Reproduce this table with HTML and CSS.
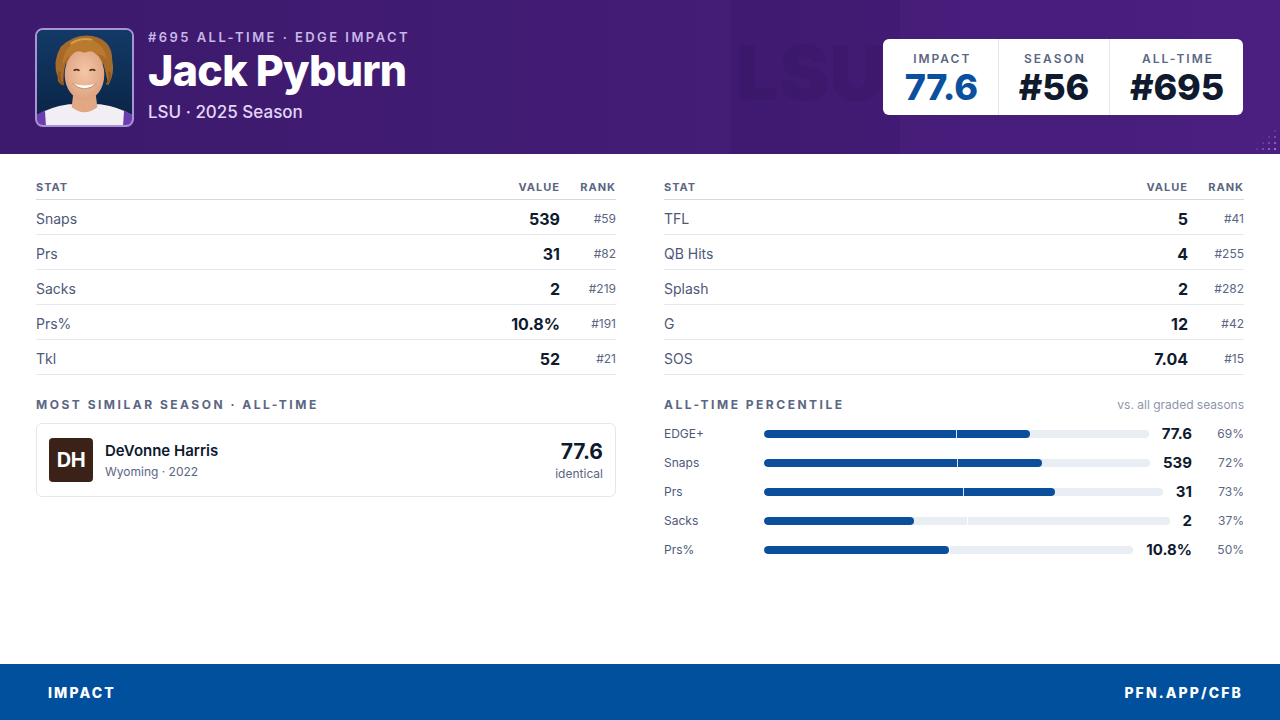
FILE: index.html
```html
<!DOCTYPE html>
<html>
<head>
<meta charset="utf-8">
<link rel="stylesheet" href="styles.css">
</head>
<body>
<div class="page">
  <header class="hero">
    <div class="band"></div>
    <div class="watermark">LSU</div>
    <div class="dots"></div>
    <div class="photo">
      <svg viewBox="0 0 96 96" width="96" height="96">
        <defs>
          <linearGradient id="bg" x1="0" y1="0" x2="0" y2="1">
            <stop offset="0" stop-color="#123a66"/>
            <stop offset="1" stop-color="#0a2344"/>
          </linearGradient>
          <radialGradient id="skin" cx="0.5" cy="0.45" r="0.6">
            <stop offset="0" stop-color="#f4c7a8"/>
            <stop offset="1" stop-color="#dc9f7c"/>
          </radialGradient>
        </defs>
        <rect width="96" height="96" fill="url(#bg)"/>
        <path d="M0 96 L0 86 Q12 78 32 75 L64 75 Q84 78 96 86 L96 96 Z" fill="#f1eff3"/>
        <path d="M0 86 Q4 83 8 81 L9 96 L0 96Z" fill="#6a3db0"/>
        <path d="M96 86 Q92 83 88 81 L87 96 L96 96Z" fill="#6a3db0"/>
        <path d="M37 62 L59 62 L61 78 Q48 88 35 78 Z" fill="#e2a884"/>
        <path d="M21 48 Q15 32 24 17 Q38 3 56 6 Q76 10 76 30 Q79 44 72 56 Q70 44 67 34 L29 34 Q26 44 27 56 Q20 54 21 48Z" fill="#a66a2b"/>
        <ellipse cx="48" cy="45" rx="20" ry="26" fill="url(#skin)"/>
        <path d="M26 36 Q26 14 46 10 Q66 8 71 30 Q66 24 60 25 Q56 19 48 23 Q40 19 35 25 Q29 27 26 36Z" fill="#b9792f"/>
        <path d="M34 14 Q44 7 56 10" stroke="#d49e50" stroke-width="2" fill="none"/>
        <path d="M23 42 Q21 50 26 55" stroke="#8c5520" stroke-width="2" fill="none"/>
        <path d="M73 42 Q75 50 70 55" stroke="#8c5520" stroke-width="2" fill="none"/>
        <path d="M36 54 Q48 65 60 54 Q48 58 36 54Z" fill="#ffffff"/>
        <path d="M36 54 Q48 65 60 54" stroke="#b0705a" stroke-width="0.8" fill="none"/>
        <path d="M37 41 Q40 39 43 41" stroke="#4e3024" stroke-width="1.6" fill="none"/>
        <path d="M53 41 Q56 39 59 41" stroke="#4e3024" stroke-width="1.6" fill="none"/>
      </svg>
    </div>
    <div class="intro">
      <div class="eyebrow">#695 ALL-TIME · EDGE IMPACT</div>
      <h1 class="name">Jack Pyburn</h1>
      <div class="sub">LSU · 2025 Season</div>
    </div>
    <div class="scorebox">
      <div class="score">
        <div class="score-label">IMPACT</div>
        <div class="score-value blue">77.6</div>
      </div>
      <div class="score">
        <div class="score-label">SEASON</div>
        <div class="score-value">#56</div>
      </div>
      <div class="score">
        <div class="score-label">ALL-TIME</div>
        <div class="score-value">#695</div>
      </div>
    </div>
  </header>

  <main class="content">
    <section class="col">
      <div class="table">
        <div class="trow thead"><span class="c-stat">STAT</span><span class="c-val">VALUE</span><span class="c-rank">RANK</span></div>
        <div class="trow"><span class="c-stat">Snaps</span><span class="c-val">539</span><span class="c-rank">#59</span></div>
        <div class="trow"><span class="c-stat">Prs</span><span class="c-val">31</span><span class="c-rank">#82</span></div>
        <div class="trow"><span class="c-stat">Sacks</span><span class="c-val">2</span><span class="c-rank">#219</span></div>
        <div class="trow"><span class="c-stat">Prs%</span><span class="c-val">10.8%</span><span class="c-rank">#191</span></div>
        <div class="trow"><span class="c-stat">Tkl</span><span class="c-val">52</span><span class="c-rank">#21</span></div>
      </div>
      <div class="section-head"><span class="section-title">MOST SIMILAR SEASON · ALL-TIME</span></div>
      <div class="card">
        <div class="avatar">DH</div>
        <div class="card-info">
          <div class="card-name">DeVonne Harris</div>
          <div class="card-sub">Wyoming · 2022</div>
        </div>
        <div class="card-score">
          <div class="card-num">77.6</div>
          <div class="card-note">identical</div>
        </div>
      </div>
    </section>

    <section class="col">
      <div class="table">
        <div class="trow thead"><span class="c-stat">STAT</span><span class="c-val">VALUE</span><span class="c-rank">RANK</span></div>
        <div class="trow"><span class="c-stat">TFL</span><span class="c-val">5</span><span class="c-rank">#41</span></div>
        <div class="trow"><span class="c-stat">QB Hits</span><span class="c-val">4</span><span class="c-rank">#255</span></div>
        <div class="trow"><span class="c-stat">Splash</span><span class="c-val">2</span><span class="c-rank">#282</span></div>
        <div class="trow"><span class="c-stat">G</span><span class="c-val">12</span><span class="c-rank">#42</span></div>
        <div class="trow"><span class="c-stat">SOS</span><span class="c-val">7.04</span><span class="c-rank">#15</span></div>
      </div>
      <div class="section-head">
        <span class="section-title">ALL-TIME PERCENTILE</span>
        <span class="section-note">vs. all graded seasons</span>
      </div>
      <div class="bars">
        <div class="bar-row"><span class="bar-label">EDGE+</span><div class="track"><div class="fill" style="width:69%"></div><div class="mid"></div></div><span class="bar-val">77.6</span><span class="bar-pct">69%</span></div>
        <div class="bar-row"><span class="bar-label">Snaps</span><div class="track"><div class="fill" style="width:72%"></div><div class="mid"></div></div><span class="bar-val">539</span><span class="bar-pct">72%</span></div>
        <div class="bar-row"><span class="bar-label">Prs</span><div class="track"><div class="fill" style="width:73%"></div><div class="mid"></div></div><span class="bar-val">31</span><span class="bar-pct">73%</span></div>
        <div class="bar-row"><span class="bar-label">Sacks</span><div class="track"><div class="fill" style="width:37%"></div><div class="mid"></div></div><span class="bar-val">2</span><span class="bar-pct">37%</span></div>
        <div class="bar-row"><span class="bar-label">Prs%</span><div class="track"><div class="fill" style="width:50%"></div><div class="mid"></div></div><span class="bar-val">10.8%</span><span class="bar-pct">50%</span></div>
      </div>
    </section>
  </main>

  <footer class="footer">
    <span class="foot-text">IMPACT</span>
    <span class="foot-text">PFN.APP/CFB</span>
  </footer>
</div>
</body>
</html>
```

FILE: styles.css
```css
* { box-sizing: border-box; margin: 0; padding: 0; }
html, body { width: 1280px; height: 720px; overflow: hidden; }
body { font-family: Inter, "Noto Sans", sans-serif; background: #ffffff; color: #0f1a2e; }

.page { width: 1280px; height: 720px; display: flex; flex-direction: column; }

.hero {
  position: relative;
  height: 154px;
  flex: 0 0 154px;
  display: flex;
  align-items: center;
  padding: 0 37px 0 35px;
  background: linear-gradient(90deg, #3d1a6d 0%, #421c74 45%, #4a1f80 100%);
  overflow: hidden;
}
.band {
  position: absolute; left: 730px; top: 0; width: 170px; height: 154px;
  background: rgba(20, 6, 50, 0.08);
}
.watermark {
  position: absolute; left: 736px; top: 34px;
  font-size: 76px; font-weight: 900; letter-spacing: 0px;
  color: rgba(25, 8, 60, 0.10);
  line-height: 1;
}
.dots {
  position: absolute; right: 0; bottom: 0; width: 32px; height: 26px;
  background-image: radial-gradient(circle, rgba(190, 160, 245, 0.7) 1px, transparent 1.5px);
  background-size: 6px 6px;
  -webkit-mask-image: linear-gradient(135deg, transparent 40%, #000 85%);
  mask-image: linear-gradient(135deg, transparent 40%, #000 85%);
}

.photo {
  position: relative;
  width: 99px; height: 99px;
  border: 2px solid #a893d4;
  border-radius: 8px;
  overflow: hidden;
  flex: 0 0 auto;
  margin-top: 1px;
}
.photo svg { display: block; width: 100%; height: 100%; }

.intro { position: relative; margin-left: 14px; display: flex; flex-direction: column; margin-top: -2px; }
.eyebrow { font-size: 13px; font-weight: 600; letter-spacing: 2.45px; color: #c9b8e8; line-height: 16px; }
.name { font-size: 43px; font-weight: 800; color: #ffffff; line-height: 46px; letter-spacing: -0.7px; margin-top: 2px; }
.sub { font-size: 17px; font-weight: 500; color: #e2d6f6; line-height: 22px; margin-top: 8px; }

.scorebox {
  position: relative;
  margin-left: auto;
  display: flex;
  background: #ffffff;
  border-radius: 6px;
  height: 76px;
  margin-top: 0px;
}
.score {
  display: flex; flex-direction: column; align-items: center;
  padding: 13px 20px 0;
  border-left: 1px solid #e3e6ee;
}
.score:first-child { border-left: none; padding-left: 22px; }
.score:last-child { padding-right: 19px; }
.score-label { font-size: 12px; font-weight: 600; letter-spacing: 2px; color: #5b6683; line-height: 14px; padding-left: 2px; }
.score-value { font-size: 36px; font-weight: 800; color: #0f1a2e; line-height: 40px; margin-top: 1px; letter-spacing: -0.2px; }
.score-value.blue { color: #0b509e; }

.content {
  flex: 1;
  display: grid;
  grid-template-columns: 1fr 1fr;
  column-gap: 48px;
  padding: 27px 36px 0;
}
.col { display: flex; flex-direction: column; }

.table { display: flex; flex-direction: column; }
.trow {
  display: flex; align-items: center;
  height: 35px;
  padding-top: 3px;
  border-bottom: 1px solid #e6e8ef;
}
.trow.thead {
  height: 19px; align-items: flex-start;
  padding-top: 0;
  border-bottom: 1px solid #d4d7e4;
}
.trow.thead span { margin-top: -1px; }
.c-stat { flex: 1; font-size: 14px; color: #4d5878; }
.c-val { font-size: 16px; font-weight: 700; color: #0f1a2e; text-align: right; }
.c-rank { width: 56px; text-align: right; font-size: 12px; color: #5b6683; }
.thead span { font-size: 11px; font-weight: 700; letter-spacing: 1px; color: #5b6683; line-height: 14px; }

.section-head {
  display: flex; justify-content: space-between; align-items: center;
  margin-top: 22px; height: 14px;
}
.section-title { font-size: 12px; font-weight: 700; letter-spacing: 2.5px; color: #5b6683; }
.section-note { font-size: 12px; color: #8d95ab; }

.card {
  margin-top: 12px;
  display: flex; align-items: center;
  border: 1px solid #e5e7ee;
  border-radius: 6px;
  padding: 14px 12px 14px 12px;
  height: 74px;
}
.avatar {
  width: 44px; height: 44px;
  background: #3b2219;
  border-radius: 4px;
  color: #ffffff; font-weight: 700; font-size: 20px;
  display: flex; align-items: center; justify-content: center;
  letter-spacing: -0.5px;
}
.card-info { margin-left: 12px; flex: 1; display: flex; flex-direction: column; }
.card-name { font-size: 15px; font-weight: 600; color: #0f1a2e; line-height: 20px; }
.card-sub { font-size: 12px; color: #5b6683; line-height: 16px; margin-top: 3px; }
.card-score { display: flex; flex-direction: column; align-items: flex-end; }
.card-num { font-size: 21px; font-weight: 700; color: #0f1a2e; line-height: 26px; }
.card-note { font-size: 12px; color: #5b6683; line-height: 16px; margin-top: 1px; }

.bars { margin-top: 8px; display: flex; flex-direction: column; }
.bar-row { display: flex; align-items: center; height: 29px; }
.bar-label { width: 100px; font-size: 12px; color: #4d5878; }
.track {
  position: relative;
  flex: 1; height: 8px;
  background: #e9edf4;
  border-radius: 4px;
  overflow: hidden;
}
.fill { height: 100%; background: #0b4f9c; border-radius: 4px; }
.mid { position: absolute; left: 50%; top: 0; width: 1px; height: 100%; background: rgba(255,255,255,0.85); }
.bar-val { margin-left: 13px; font-size: 15px; font-weight: 700; color: #0f1a2e; }
.bar-pct { width: 52px; text-align: right; font-size: 12px; color: #5b6683; }

.footer {
  flex: 0 0 56px;
  background: #00509e;
  display: flex; justify-content: space-between; align-items: center;
  padding: 0 37px 0 48px;
}
.foot-text { color: #ffffff; font-size: 14px; font-weight: 800; letter-spacing: 2.1px; }
```
